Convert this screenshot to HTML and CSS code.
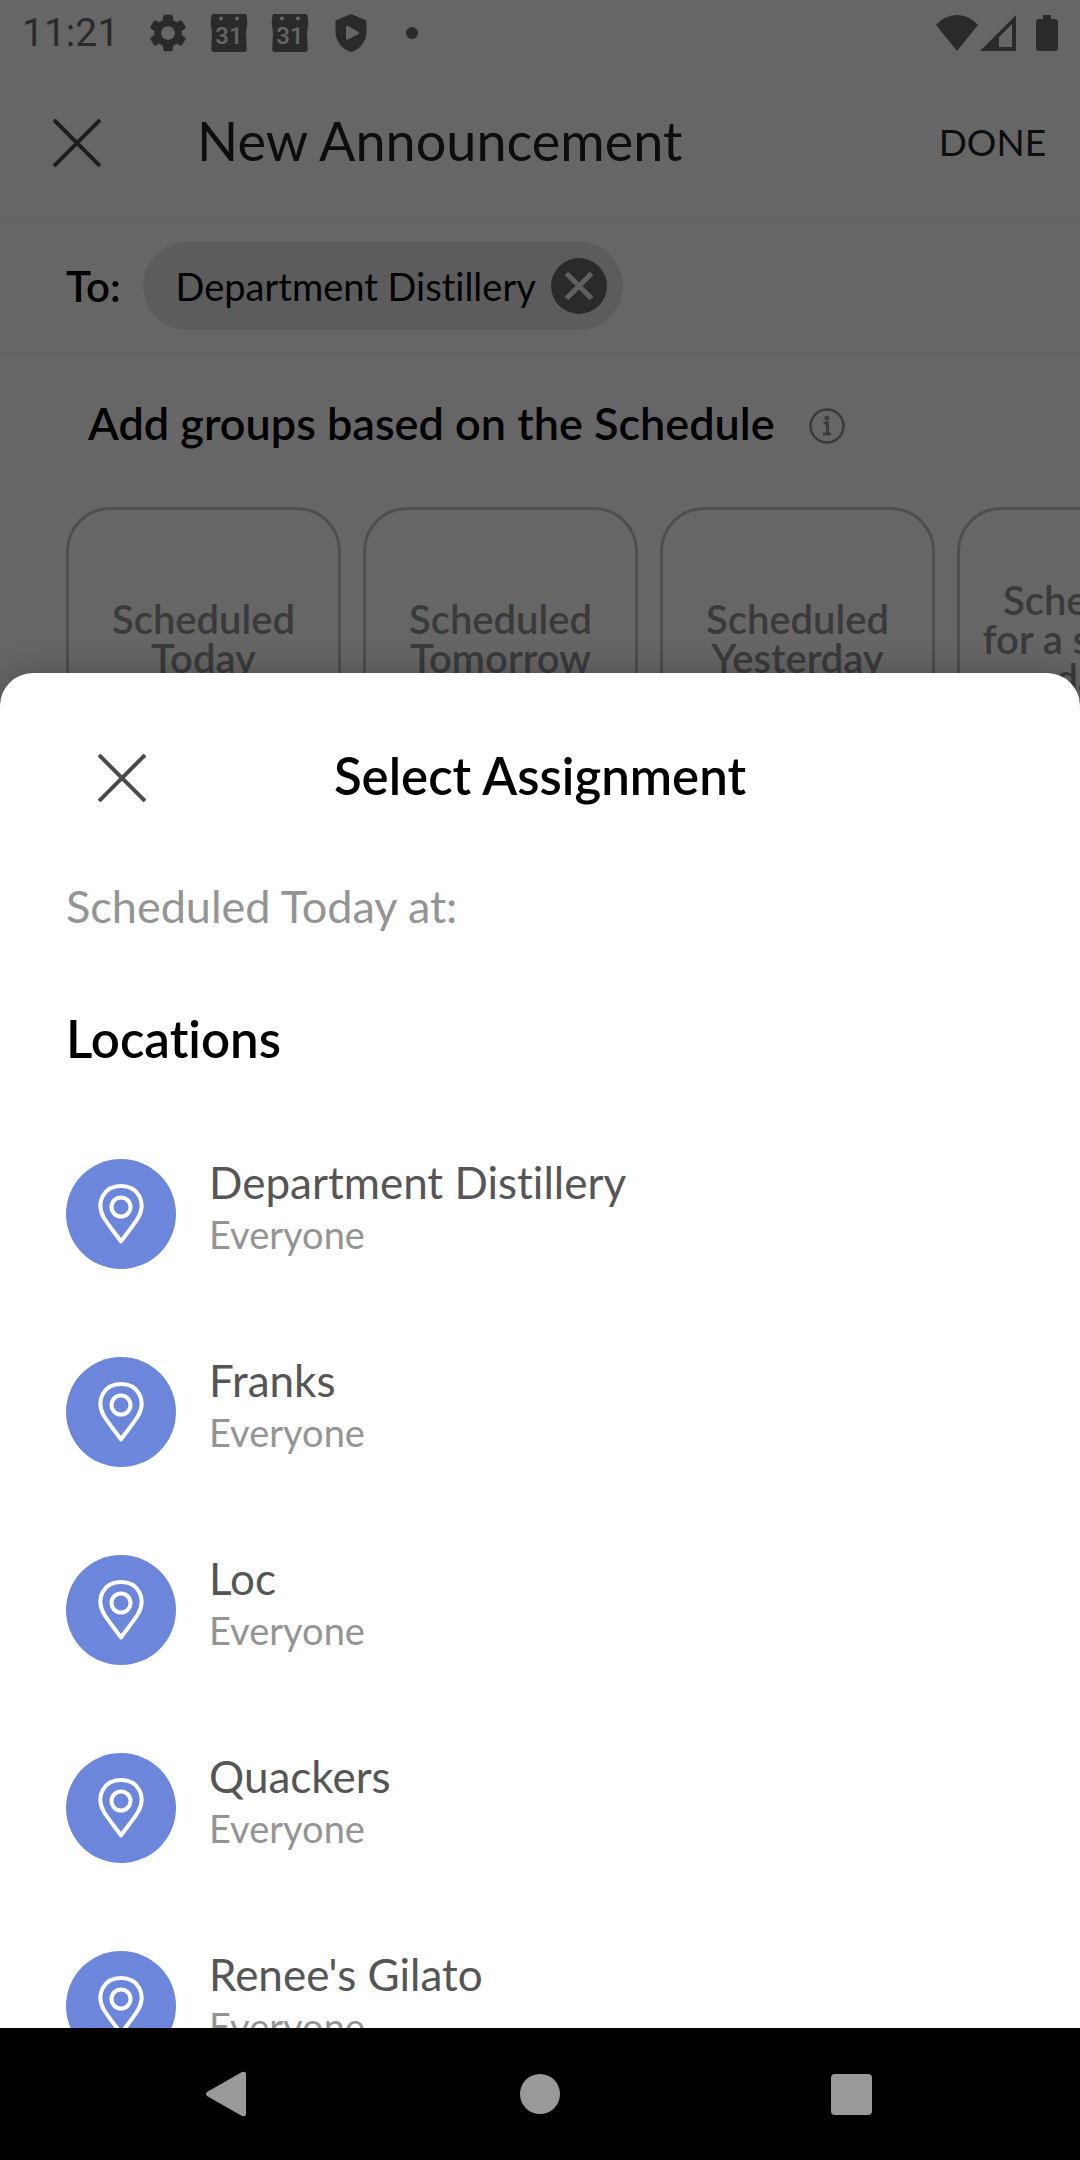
FILE: index.html
```html
<!DOCTYPE html>
<html lang="en">
<head>
  <meta charset="UTF-8" />
  <meta name="viewport" content="width=device-width, initial-scale=1.0" />
  <title>New Announcement</title>
  <link rel="stylesheet" href="styles.css">
</head>
<body>
<!-- shared icons -->
<svg class="sprite" aria-hidden="true">
  <symbol id="cross" viewBox="0 0 48 48">
    <path d="M1 1L47 47M47 1L1 47" fill="none" stroke="currentColor" stroke-width="4" />
  </symbol>
  <symbol id="calendar" viewBox="0 0 38 38">
    <path fill="currentColor" fill-rule="evenodd" d="M3 0H35Q36.500 0 36.700 2L37.300 9L36 19L36.800 35.500Q36.500 38 34.500 38H3.500Q1.500 38 1.200 35.500L2 19L.7 9L1.300 2Q1.500 0 3 0ZM11 2.500a2 2 0 1 0 .01 0ZM27 2.500a2 2 0 1 0 .01 0Z" />
  </symbol>
  <symbol id="pin" viewBox="0 0 46 60">
    <g fill="none" stroke="#fff" stroke-width="4">
      <path d="M23 57.500C20 53 11 42 6 34C-3 18 6 2 23 2S49 18 40 34C35 42 26 53 23 57.500Z" stroke-linejoin="round" />
      <circle cx="23" cy="23" r="9.500" />
    </g>
  </symbol>
</svg>

<div class="screen">
  <div class="status">
    <span class="clock">11:21</span>
    <div class="notifications">
      <svg width="38" height="38" viewBox="2 2 20 20"><path fill="currentColor" d="M19.140 12.940c.04-.3.060-.610.060-.940 0-.320-.020-.640-.070-.940l2.030-1.580c.180-.140.230-.410.120-.610l-1.920-3.320c-.120-.220-.370-.290-.590-.220l-2.390.960c-.5-.380-1.030-.7-1.620-.940L14.400 2.810c-.040-.240-.240-.410-.480-.410h-3.840c-.240 0-.430.170-.470.410L9.250 5.350C8.660 5.590 8.120 5.920 7.630 6.290L5.240 5.330c-.220-.080-.470 0-.590.220L2.740 8.870c-.120.210-.080.470.120.610l2.030 1.580c-.050.3-.090.630-.090.940s.020.640.070.940l-2.030 1.580c-.180.140-.230.410-.120.610l1.920 3.320c.120.220.370.290.590.220l2.390-.960c.5.380 1.030.7 1.620.940l.360 2.540c.050.240.240.410.480.410h3.840c.240 0 .440-.170.470-.410l.360-2.540c.590-.240 1.130-.560 1.620-.940l2.390.960c.220.080.470 0 .590-.220l1.920-3.320c.120-.220.070-.470-.120-.610L19.140 12.940zM12 15.600c-1.980 0-3.600-1.620-3.600-3.600s1.620-3.600 3.600-3.600 3.600 1.620 3.600 3.600-1.620 3.600-3.600 3.600z" /></svg>
      <svg width="38" height="38"><use href="#calendar" /><text class="calendar-day" x="19" y="30" text-anchor="middle">31</text></svg>
      <svg width="38" height="38"><use href="#calendar" /><text class="calendar-day" x="19" y="30" text-anchor="middle">31</text></svg>
      <svg width="38" height="38" viewBox="0 0 38 38"><path fill="currentColor" fill-rule="evenodd" d="M19 0L34.500 6.500V18C34.500 27 28 35.500 19 38C10 35.500 3.500 27 3.500 18V6.500ZM14 13.500V24Q14 26.500 16 25.500L26.500 20Q28 19 26.500 18L16 12Q14 11 14 13.500Z" /></svg>
      <svg width="38" height="38" viewBox="0 0 38 38"><circle cx="19" cy="19" r="6" fill="currentColor" /></svg>
    </div>
    <div class="signals">
      <svg width="42" height="36" viewBox="0 0 42 36"><path fill="currentColor" d="M0 10Q9 0 21 0T42 10L21 36Z" /></svg>
      <svg width="36" height="36" viewBox="0 0 36 36"><path fill="currentColor" fill-rule="evenodd" d="M36 0V36H0ZM32 9L19 22V32H32Z" /></svg>
      <svg class="battery" width="22" height="36" viewBox="0 0 22 36"><path fill="currentColor" d="M7 0H15V4H19Q22 4 22 7V33Q22 36 19 36H3Q0 36 0 33V7Q0 4 3 4H7Z" /></svg>
    </div>
  </div>

  <header class="topbar">
    <button type="button" class="close" aria-label="Close"><svg width="48" height="48"><use href="#cross" /></svg></button>
    <h1>New Announcement</h1>
    <button type="button" class="done">DONE</button>
  </header>

  <div class="recipients">
    <span class="to">To:</span>
    <div class="chip">
      <span>Department Distillery</span>
      <button type="button" aria-label="Remove Department Distillery">
        <svg width="56" height="56" viewBox="0 0 56 56"><circle cx="28" cy="28" r="28" fill="#696969" /><path d="M15.500 15.500L40.500 40.500M40.500 15.500L15.500 40.500" stroke="#f0f0f0" stroke-width="5" /></svg>
      </button>
    </div>
  </div>

  <div class="groups-title">
    <h2>Add groups based on the Schedule</h2>
    <button type="button" aria-label="About schedule groups">
      <svg width="36" height="36" viewBox="0 0 36 36"><circle cx="18" cy="18" r="16.500" fill="none" stroke="currentColor" stroke-width="2.500" /><circle cx="18" cy="10" r="2.500" fill="currentColor" /><path d="M14.500 15H18.500V26M14 26H22" fill="none" stroke="currentColor" stroke-width="3" /></svg>
    </button>
  </div>

  <div class="cards">
    <button type="button" class="card">Scheduled<br>Today</button>
    <button type="button" class="card">Scheduled<br>Tomorrow</button>
    <button type="button" class="card">Scheduled<br>Yesterday</button>
    <button type="button" class="card">Scheduled<br>for a specific<br>date</button>
  </div>

  <div class="backdrop"></div>

  <section class="sheet">
    <div class="sheet-header">
      <button type="button" class="close" aria-label="Close"><svg width="48" height="48"><use href="#cross" /></svg></button>
      <h2>Select Assignment</h2>
    </div>
    <p class="hint">Scheduled Today at:</p>
    <h3>Locations</h3>
    <ul class="locations">
      <li>
        <span class="avatar"><svg width="46" height="60"><use href="#pin" /></svg></span>
        <div class="details"><p class="name">Department Distillery</p><p class="who">Everyone</p></div>
      </li>
      <li>
        <span class="avatar"><svg width="46" height="60"><use href="#pin" /></svg></span>
        <div class="details"><p class="name">Franks</p><p class="who">Everyone</p></div>
      </li>
      <li>
        <span class="avatar"><svg width="46" height="60"><use href="#pin" /></svg></span>
        <div class="details"><p class="name">Loc</p><p class="who">Everyone</p></div>
      </li>
      <li>
        <span class="avatar"><svg width="46" height="60"><use href="#pin" /></svg></span>
        <div class="details"><p class="name">Quackers</p><p class="who">Everyone</p></div>
      </li>
      <li>
        <span class="avatar"><svg width="46" height="60"><use href="#pin" /></svg></span>
        <div class="details"><p class="name">Renee's Gilato</p><p class="who">Everyone</p></div>
      </li>
    </ul>
  </section>
</div>

<nav class="navbar">
  <button type="button" aria-label="Back"><svg width="46" height="46" viewBox="0 0 46 46"><path fill="currentColor" d="M2 21L37 1Q41 0 41 3V43Q41 46 37 45L2 25Q0 23 2 21Z" /></svg></button>
  <button type="button" aria-label="Home"><svg width="46" height="46" viewBox="0 0 46 46"><circle cx="23" cy="23" r="20" fill="currentColor" /></svg></button>
  <button type="button" aria-label="Recent apps"><svg width="46" height="46" viewBox="0 0 46 46"><rect x="2" y="3" width="41" height="41" rx="4" fill="currentColor" /></svg></button>
</nav>
</body>
</html>
```
FILE: styles.css
```css
* {
  box-sizing: border-box;
}
body {
  display: flex;
  flex-direction: column;
  height: 100vh;
  margin: 0;
  font-family: Lato, "Liberation Sans", sans-serif;
  font-size: 38px;
  font-variant-ligatures: none;
  color: #000;
  background-color: #fff;
}
h1,
h2,
h3,
p,
ul {
  margin: 0;
  padding: 0;
}
h2,
h3 {
  font-weight: 600;
}
svg {
  display: block;
}
button {
  padding: 0;
  border: none;
  background: none;
  color: inherit;
  font: inherit;
  cursor: pointer;
}
.sprite {
  position: absolute;
  width: 0;
  height: 0;
}
.screen {
  position: relative;
  flex: 1;
  min-height: 0;
  overflow: hidden;
}

/* status bar */
.status {
  display: flex;
  align-items: center;
  height: 66px;
  padding: 0 22px;
  color: #696969;
}
.clock {
  font-family: Roboto, sans-serif;
  font-size: 39px;
}
.notifications {
  display: flex;
  gap: 23px;
  margin-left: 30px;
}
.calendar-day {
  font-family: Roboto, sans-serif;
  font-size: 24px;
  font-weight: 500;
  fill: #fff;
}
.signals {
  display: flex;
  gap: 2px;
  margin-left: auto;
}
.battery {
  margin-left: 18px;
}

.topbar {
  display: flex;
  align-items: center;
  height: 157px;
  padding: 0 34px 0 53px;
  border-bottom: 3px solid #f8f8f8;
  color: #212121;
}
.topbar h1,
.groups-title h2,
.sheet-header h2 {
  padding-bottom: 6px;
}
.close {
  color: #4a4a4a;
}
.topbar h1 {
  flex: 1;
  margin-left: 96px;
  font-size: 54px;
  font-weight: 400;
}
.done {
  padding-bottom: 4px;
  font-size: 37px;
}

.recipients {
  display: flex;
  align-items: center;
  gap: 22px;
  height: 132px;
  padding: 0 66px 4px;
  border-bottom: 3px solid #f8f8f8;
}
.to {
  font-size: 42px;
  font-weight: 600;
}
.chip {
  display: flex;
  align-items: center;
  gap: 15px;
  height: 88px;
  padding: 0 16px 0 33px;
  border-radius: 44px;
  background-color: #e6e6e6;
}

.groups-title {
  display: flex;
  align-items: center;
  gap: 34px;
  height: 142px;
  padding: 0 88px;
}
.groups-title h2 {
  font-size: 45px;
}
.groups-title button {
  color: #919191;
}

.cards {
  display: flex;
  gap: 22px;
  margin-top: 10px;
  padding-left: 66px;
}
.card {
  flex: none;
  width: 275px;
  height: 264px;
  border: 3px solid #c3c3c3;
  border-radius: 44px;
  color: #919191;
  font-size: 40px;
  font-weight: 600;
  line-height: 39px;
}

.backdrop {
  position: absolute;
  inset: 0;
  background-color: rgba(0, 0, 0, 0.6);
}

/* bottom sheet */
.sheet {
  position: absolute;
  inset: 673px 0 0;
  overflow: hidden;
  border-radius: 33px 33px 0 0;
  background-color: #fff;
  box-shadow: 0 0 32px rgba(0, 0, 0, 0.25);
}
.sheet-header {
  display: grid;
  grid-template-columns: 48px 1fr 48px;
  align-items: center;
  height: 210px;
  padding: 0 98px;
}
.sheet-header h2 {
  text-align: center;
}
.sheet-header h2,
.sheet h3 {
  font-size: 51px;
}
.hint {
  padding: 0 66px;
  font-size: 45px;
  line-height: 46px;
  color: #949494;
}
.sheet h3 {
  margin-top: 80px;
  padding: 0 66px;
  line-height: 60px;
}
.locations {
  padding: 46px 66px;
  list-style: none;
}
.locations li {
  display: flex;
  align-items: center;
  gap: 33px;
  height: 198px;
}
.avatar {
  display: grid;
  place-items: center;
  width: 110px;
  height: 110px;
  border-radius: 50%;
  background-color: #6c86db;
}
.details {
  margin-bottom: 14px;
}
.name {
  font-size: 44px;
  line-height: 54px;
  color: #555;
}
.who {
  line-height: 50px;
  color: #949494;
}

.navbar {
  display: flex;
  align-items: center;
  height: 132px;
  padding: 0 72px;
  background-color: #000;
  color: #999;
}
.navbar button {
  display: grid;
  flex: 1;
  place-items: center;
}
```
